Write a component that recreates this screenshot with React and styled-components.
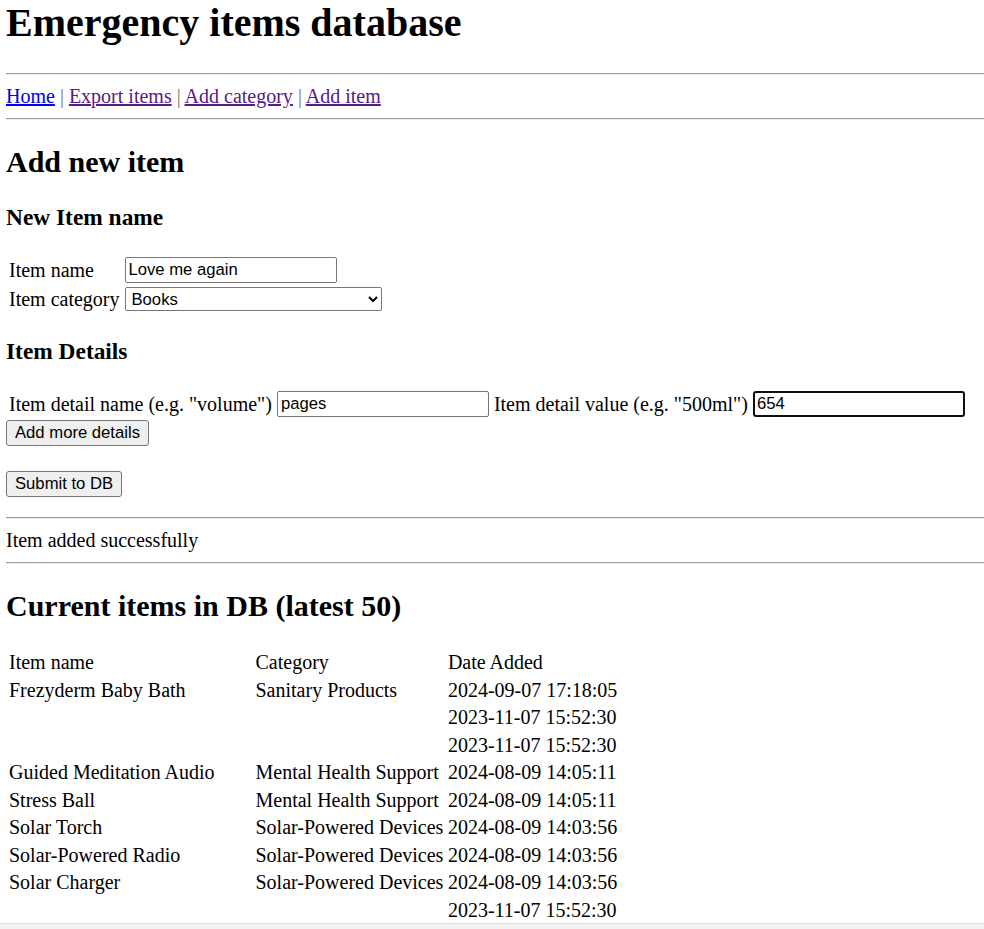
import React from "react";
import styled, { createGlobalStyle, css } from "styled-components";

const GlobalStyle = createGlobalStyle`
  html, body {
    overflow: hidden;
  }

  body {
    margin: 0 0 0 6px;
    background: #fff;
    color: #000;
    font-family: "Liberation Serif", "Times New Roman", serif;
    font-size: 20px;
    line-height: 23px;
  }
`;

const Page = styled.div`
  display: block;
`;

const Title = styled.h1`
  margin: 0 0 26.8px;
  font-size: 40px;
  line-height: 46px;
  font-weight: bold;
`;

const Rule = styled.hr`
  margin: ${(p) => (p.$top ? `${p.$top}px` : "10px")} 0 10px;
  border: none;
  border-top: 1px solid #9a9a9a;
  border-bottom: 1px solid #eeeeee;
  height: 0;
`;

const Nav = styled.div`
  line-height: 23px;
`;

const NavLink = styled.a`
  color: ${(p) => (p.$visited ? "#551a8b" : "#0000ee")};
  text-decoration: underline;
`;

const Pipe = styled.span`
  color: #777;
`;

const Heading = styled.h2`
  margin: 24.9px 0;
  font-size: 30px;
  line-height: 34.5px;
  font-weight: bold;
`;

const SubHeading = styled.h3`
  margin: 23.4px 0;
  font-size: 23.4px;
  line-height: 27px;
  font-weight: bold;
`;

const FormTable = styled.table`
  border-collapse: separate;
  border-spacing: 2px;

  td {
    padding: 1px;
    vertical-align: middle;
    white-space: nowrap;
  }

  td + td {
    padding-left: 2px;
  }
`;

const control = css`
  box-sizing: border-box;
  font-family: "Liberation Sans", Arial, sans-serif;
  font-size: 16.67px;
  color: #000;
  background: #fff;
  margin: 0;
  vertical-align: middle;
`;

const TextInput = styled.input`
  ${control}
  display: block;
  width: 212px;
  height: 26px;
  padding: 0 ${(p) => (p.$focused ? "2px" : "3px")};
  border: ${(p) => (p.$focused ? "2px solid #101010" : "1px solid #767676")};
  border-radius: ${(p) => (p.$focused ? "3px" : "2px")};
  outline: none;
`;

const Select = styled.select`
  ${control}
  display: block;
  width: 257px;
  height: 24px;
  padding: 0 2px;
  border: 1px solid #767676;
  border-radius: 2px;
`;

const ButtonRow = styled.div`
  display: flex;
  margin-top: ${(p) => p.$top || 0}px;
`;

const Button = styled.button`
  ${control}
  height: 26px;
  padding: 0 8px;
  background: #efefef;
  border: 1px solid #767676;
  border-radius: 3px;
`;

const Message = styled.div`
  line-height: 23px;
`;

const ItemsTable = styled.table`
  border-collapse: separate;
  border-spacing: 2px;

  td {
    padding: 1px;
    line-height: 23.5px;
    white-space: nowrap;
    vertical-align: middle;
  }

  td:first-child {
    width: 242px;
  }

  td + td {
    padding-left: 1.5px;
  }
`;

const WindowEdge = styled.div`
  position: fixed;
  left: 0;
  right: 0;
  bottom: 0;
  height: 5px;
  background: #f3f3f3;
  border-top: 1px solid #dedede;
`;

const links = [
  { label: "Home", visited: false },
  { label: "Export items", visited: true },
  { label: "Add category", visited: true },
  { label: "Add item", visited: true },
];

const items = [
  ["Item name", "Category", "Date Added"],
  ["Frezyderm Baby Bath", "Sanitary Products", "2024-09-07 17:18:05"],
  ["", "", "2023-11-07 15:52:30"],
  ["", "", "2023-11-07 15:52:30"],
  ["Guided Meditation Audio", "Mental Health Support", "2024-08-09 14:05:11"],
  ["Stress Ball", "Mental Health Support", "2024-08-09 14:05:11"],
  ["Solar Torch", "Solar-Powered Devices", "2024-08-09 14:03:56"],
  ["Solar-Powered Radio", "Solar-Powered Devices", "2024-08-09 14:03:56"],
  ["Solar Charger", "Solar-Powered Devices", "2024-08-09 14:03:56"],
  ["", "", "2023-11-07 15:52:30"],
];

const App = () => {
  return (
    <Page>
      <GlobalStyle />
      <Title>Emergency items database</Title>

      <Rule />
      <Nav>
        {links.map((l, i) => (
          <React.Fragment key={l.label}>
            {i > 0 && <Pipe> | </Pipe>}
            <NavLink href="#" $visited={l.visited}>
              {l.label}
            </NavLink>
          </React.Fragment>
        ))}
      </Nav>
      <Rule />

      <Heading>Add new item</Heading>

      <SubHeading>New Item name</SubHeading>
      <FormTable>
        <tbody>
          <tr>
            <td>Item name</td>
            <td>
              <TextInput defaultValue="Love me again" />
            </td>
          </tr>
          <tr>
            <td>Item category</td>
            <td>
              <Select defaultValue="Books">
                <option>Books</option>
                <option>Sanitary Products</option>
                <option>Mental Health Support</option>
                <option>Solar-Powered Devices</option>
              </Select>
            </td>
          </tr>
        </tbody>
      </FormTable>

      <SubHeading>Item Details</SubHeading>
      <FormTable>
        <tbody>
          <tr>
            <td>Item detail name (e.g. "volume")</td>
            <td>
              <TextInput defaultValue="pages" />
            </td>
            <td>Item detail value (e.g. "500ml")</td>
            <td>
              <TextInput defaultValue="654" $focused autoFocus />
            </td>
          </tr>
        </tbody>
      </FormTable>
      <ButtonRow>
        <Button>Add more details</Button>
      </ButtonRow>
      <ButtonRow $top={24.5}>
        <Button>Submit to DB</Button>
      </ButtonRow>

      <Rule $top={20} />
      <Message>Item added successfully</Message>
      <Rule />

      <Heading>Current items in DB (latest 50)</Heading>
      <ItemsTable>
        <tbody>
          {items.map((row, i) => (
            <tr key={i}>
              {row.map((cell, j) => (
                <td key={j}>{cell}</td>
              ))}
            </tr>
          ))}
        </tbody>
      </ItemsTable>

      <WindowEdge />
    </Page>
  );
};

export default App;
